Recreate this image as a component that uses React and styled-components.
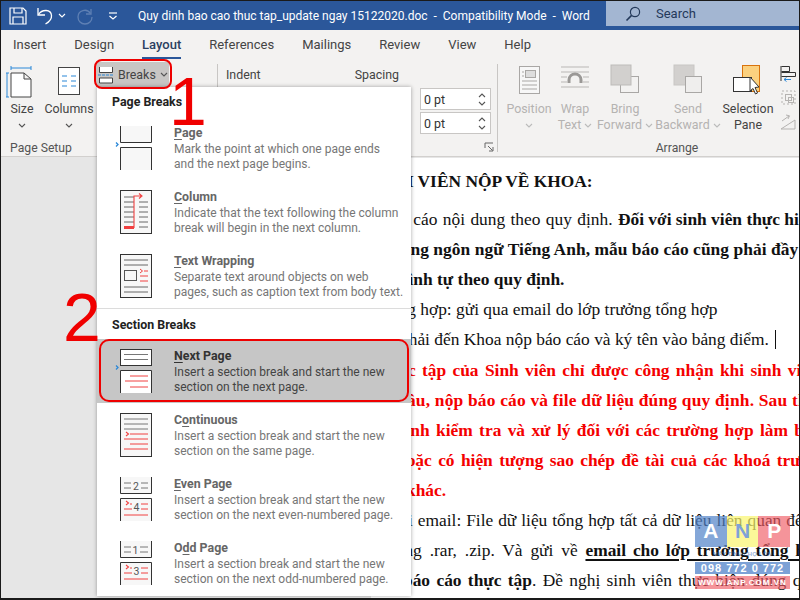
import React from 'react';
import styled, { createGlobalStyle } from 'styled-components';

const UI_FONT = `Roboto, 'Open Sans', sans-serif`;

const GlobalStyle = createGlobalStyle`
  html, body {
    margin: 0;
    padding: 0;
    background: #fff;
  }
`;

const Root = styled.div`
  position: relative;
  box-sizing: border-box;
  width: 800px;
  height: 600px;
  border: 1px solid #1a1a1a;
  border-bottom-width: 2px;
  overflow: hidden;
  display: flex;
  flex-direction: column;
  font-family: ${UI_FONT};
  background: #e6e6e6;
`;

const TitleBar = styled.div`
  height: 29px;
  flex: none;
  display: flex;
  align-items: center;
  background: #2b579a;
  color: #fff;
`;

const QuickAccess = styled.div`
  display: flex;
  align-items: center;
  width: 137px;
  flex: none;
  padding-left: 7px;
  box-sizing: border-box;
`;

const QuickSlot = styled.div`
  display: flex;
  margin-left: ${p => p.$left || 0}px;
`;

const DocTitle = styled.div`
  width: 468px;
  flex: none;
  font-size: 12px;
  white-space: pre;
`;

const SearchBox = styled.div`
  flex: 1;
  height: 25px;
  align-self: flex-start;
  display: flex;
  align-items: center;
  gap: 15px;
  padding-left: 19px;
  background: #a3b6d2;
  color: #24395a;
  font-size: 13px;
`;

const Tabs = styled.div`
  height: 30px;
  flex: none;
  display: flex;
  gap: 28px;
  padding-left: 12px;
  background: #f3f2f1;
`;

const Tab = styled.div`
  height: 27px;
  line-height: 30px;
  font-size: 13px;
  color: #444;
  ${p => p.$active && `
    color: #2b3f5f;
    font-weight: 500;
    border-bottom: 2px solid #2b579a;
  `}
`;

const Ribbon = styled.div`
  height: 96px;
  flex: none;
  display: flex;
  background: #f3f2f1;
  border-bottom: 1px solid #d2d0ce;
`;

const Group = styled.div`
  position: relative;
  width: ${p => p.$width}px;
  flex: none;
  box-sizing: border-box;
  margin-top: 4px;
  height: 88px;
  border-right: ${p => (p.$last ? 'none' : '1px solid #c8c6c4')};
  display: flex;
`;

const LargeButton = styled.div`
  width: ${p => p.$width}px;
  flex: none;
  display: flex;
  flex-direction: column;
  align-items: center;
  font-size: 12.4px;
  line-height: 16px;
  color: ${p => (p.$disabled ? '#b5b3b1' : '#444')};
  white-space: nowrap;
`;

const LargeIcon = styled.div`
  height: 37px;
  display: flex;
  align-items: flex-start;
`;

const LabelLine = styled.span`
  display: flex;
  align-items: center;
  height: 16px;
  gap: 3px;
`;

const GroupLabel = styled.div`
  position: absolute;
  bottom: -4px;
  left: ${p => p.$center - 50}px;
  width: 100px;
  text-align: center;
  font-size: 12.2px;
  line-height: 16px;
  color: #555;
`;

const BreaksColumn = styled.div`
  padding-left: 1px;
`;

const BreaksButton = styled.div`
  margin-top: -2px;
  width: 73px;
  height: 25px;
  display: flex;
  align-items: center;
  gap: 4px;
  padding-left: 2px;
  box-sizing: border-box;
  background: #c8c6c4;
  font-size: 12.4px;
  color: #444;
`;

const ParagraphColumn = styled.div`
  flex: 1;
  display: flex;
  flex-direction: column;
  padding-left: 8px;
`;

const FieldHeads = styled.div`
  display: flex;
  font-size: 12.4px;
  line-height: 16px;
  color: #444;
  margin-top: 3px;
  gap: 94px;
`;

const SpinColumn = styled.div`
  margin: 5px 0 0 194px;
  display: flex;
  flex-direction: column;
  gap: 2px;
`;

const SpinInput = styled.div`
  width: 71px;
  height: 22px;
  box-sizing: border-box;
  border: 1px solid #c8c6c4;
  background: #fff;
  display: flex;
  align-items: center;
  justify-content: space-between;
  padding: 0 4px 0 3px;
  font-size: 12.4px;
  color: #333;
`;

const SpinArrows = styled.div`
  display: flex;
  flex-direction: column;
  gap: 3px;
`;

const Launcher = styled.div`
  position: absolute;
  right: 3px;
  bottom: 0;
  display: flex;
`;

const SmallColumn = styled.div`
  display: flex;
  flex-direction: column;
  gap: 4px;
`;

const SmallRow = styled.div`
  display: flex;
  align-items: center;
  gap: 2px;
  height: 20px;
  font-size: 12.4px;
  color: ${p => (p.$disabled ? '#b5b3b1' : '#444')};
  white-space: nowrap;
`;

const Workspace = styled.div`
  flex: 1;
  min-height: 0;
  padding-left: 370px;
  overflow: hidden;
`;

const Page = styled.div`
  height: 100%;
  margin-top: 1px;
  padding-top: 8px;
  box-sizing: border-box;
  background: #fff;
  font-family: 'Liberation Serif', 'Times New Roman', serif;
  font-size: 17.4px;
  color: #111;
`;

const Line = styled.div`
  height: 30px;
  line-height: 30px;
  white-space: pre;
  padding-left: ${p => p.$start}px;
  margin-top: ${p => p.$gap || 0}px;
  word-spacing: ${p => p.$words || 0}px;
  letter-spacing: ${p => p.$letters || 0}px;
  font-weight: ${p => (p.$bold ? 700 : 400)};
  color: ${p => (p.$red ? '#f40000' : 'inherit')};
`;

const Strong = styled.b`
  word-spacing: ${p => p.$words || 0}px;
  text-decoration: ${p => (p.$under ? 'underline' : 'none')};
  text-decoration-thickness: 2px;
  text-underline-offset: 3px;
`;

const Caret = styled.span`
  display: inline-block;
  width: 1px;
  height: 19px;
  margin-left: 6px;
  background: #111;
  vertical-align: -4px;
`;

const Menu = styled.div`
  position: absolute;
  left: 96px;
  top: 86px;
  width: 314px;
  height: 509px;
  background: #fff;
  box-shadow: 0 0 4px rgba(0, 0, 0, 0.35);
`;

const MenuHead = styled.div`
  height: ${p => p.$height}px;
  line-height: ${p => p.$line}px;
  padding-left: 15px;
  font-size: 12.4px;
  font-weight: 700;
  color: #222;
  ${p => p.$rule && 'border-top: 1px solid #dcdcdc;'}
`;

const MenuItem = styled.div`
  height: 64px;
  box-sizing: border-box;
  display: flex;
  gap: 18px;
  padding: 8px 0 0 15px;
  ${p => p.$active && 'background: #c6c6c6;'}
`;

const ItemText = styled.div`
  flex: 1;
`;

const ItemTitle = styled.div`
  font-size: 12.4px;
  line-height: 18px;
  font-weight: 700;
  color: ${p => (p.$active ? '#333' : '#666')};
  u {
    text-underline-offset: 2px;
  }
`;

const ItemDesc = styled.div`
  font-size: 12px;
  line-height: 15px;
  color: ${p => (p.$active ? '#444' : '#767676')};
  white-space: nowrap;
`;

const Callout = styled.div`
  position: absolute;
  left: ${p => p.$left}px;
  top: ${p => p.$top}px;
  width: ${p => p.$width}px;
  height: ${p => p.$height}px;
  box-sizing: border-box;
  border: 2px solid #ee0000;
  border-radius: ${p => p.$radius}px;
`;

const Numeral = styled.div`
  position: absolute;
  left: ${p => p.$left}px;
  top: ${p => p.$top}px;
  font-family: 'Liberation Sans', Arial, sans-serif;
  font-size: 68px;
  line-height: 68px;
  color: #f00000;
`;

const Watermark = styled.div`
  position: absolute;
  left: 694px;
  top: 515px;
  width: 95px;
  display: flex;
  flex-direction: column;
  font-family: 'Liberation Sans', Arial, sans-serif;
  font-weight: 700;
  color: #fff;
  text-align: center;
`;

const LogoRow = styled.div`
  display: flex;
  height: 31px;
`;

const LogoLetter = styled.div`
  flex: 1;
  background: ${p => p.$bg};
  color: ${p => p.$color || '#fff'};
  font-size: 21px;
  line-height: 30px;
`;

const WatermarkNote = styled.div`
  height: 15px;
  line-height: 15px;
  font-size: 6px;
  color: rgba(60, 110, 180, 0.55);
  white-space: nowrap;
`;

const WatermarkBar = styled.div`
  height: ${p => p.$height}px;
  line-height: ${p => p.$height}px;
  margin-bottom: ${p => p.$after || 0}px;
  background: ${p => p.$bg};
  font-size: ${p => p.$size}px;
  letter-spacing: 1px;
  white-space: nowrap;
  overflow: hidden;
`;

const Chevron = ({ color = '#555', up = false }) => (
  <svg width="8" height="5" viewBox="0 0 8 5">
    <path d={up ? 'M1 4 L4 1 L7 4' : 'M1 1 L4 4 L7 1'} fill="none" stroke={color} strokeWidth="1.1" />
  </svg>
);

const SaveIcon = () => (
  <svg width="20" height="20" viewBox="0 0 20 20" fill="none" stroke="#fff" strokeWidth="1.2">
    <path d="M2 2 H15 L18 5 V18 H2 Z" />
    <path d="M6 2 V7 H14 V2" />
    <path d="M5 18 V11 H15 V18" />
  </svg>
);

const UndoIcon = () => (
  <svg width="20" height="20" viewBox="0 0 20 20" fill="none" stroke="#fff" strokeWidth="1.3">
    <path d="M2 2 V9 H9" />
    <path d="M2.5 8.5 C6 3 15 3 15.5 9.5 C15.8 13 13 16 9.5 18" />
  </svg>
);

const RedoIcon = () => (
  <svg width="20" height="20" viewBox="0 0 20 20" fill="none" stroke="#5f80b4" strokeWidth="1.3">
    <path d="M16 3 V8 H11" />
    <path d="M15.5 7.5 C12 2 3 4 3 11 C3 15 6 18 10 18 C14 18 17 15 17 11" />
  </svg>
);

const CustomizeIcon = () => (
  <svg width="10" height="8" viewBox="0 0 10 8" fill="none" stroke="#fff" strokeWidth="1.2">
    <path d="M1 1 H9" />
    <path d="M1.5 4 L5 7 L8.5 4" />
  </svg>
);

const SearchIcon = () => (
  <svg width="16" height="16" viewBox="0 0 16 16" fill="none" stroke="#24395a" strokeWidth="1.2">
    <circle cx="10" cy="6" r="4.6" />
    <path d="M6.6 9.4 L1.5 14.5" strokeWidth="1.6" />
  </svg>
);

const SizeIcon = () => (
  <svg width="32" height="36" viewBox="0 0 32 36" fill="none">
    <path d="M5 33 V9 H18 L25 15 V33 Z M18 9 V15 H25" fill="#fff" stroke="#444" />
    <path d="M5 4 H25 M5 2 V6 M25 2 V6" stroke="#2b88d8" />
    <path d="M1 9 V33 M-1 9 H3 M-1 33 H3" stroke="#2b88d8" />
  </svg>
);

const ColumnsIcon = () => (
  <svg width="24" height="36" viewBox="0 0 24 36" fill="none">
    <rect x="1.5" y="3.5" width="21" height="27" fill="#fff" stroke="#444" />
    <path d="M5 12 H10 M14 12 H19 M5 17 H10 M14 17 H19 M5 22 H10 M14 22 H19" stroke="#2b88d8" strokeWidth="1.2" />
  </svg>
);

const BreaksIcon = () => (
  <svg width="16" height="18" viewBox="0 0 16 18" fill="none">
    <path d="M1.5 1 V6.5 H14.5 V1" fill="#fff" stroke="#444" />
    <path d="M0 9 H16" stroke="#2b88d8" strokeDasharray="3 1" />
    <path d="M1.5 17 V12 H14.5 V17 Z" fill="#fff" stroke="#444" />
  </svg>
);

const PositionIcon = () => (
  <svg width="24" height="30" viewBox="0 0 24 30" fill="none" stroke="#a9a7a5">
    <rect x="2.5" y="2.5" width="20" height="27" fill="#f7f7f7" />
    <rect x="8.5" y="6.5" width="10" height="7" fill="#ddd" />
    <path d="M5 8 H7 M5 12 H7 M5 17 H20 M5 21 H20 M5 25 H20" />
  </svg>
);

const WrapIcon = () => (
  <svg width="30" height="26" viewBox="0 0 30 26" fill="none" stroke="#b9b7b5">
    <path d="M1 3 H29 M1 8 H29 M1 13 H7 M23 13 H29 M1 18 H7 M23 18 H29 M1 23 H29" />
    <path d="M9 19 V16 C9 8 21 8 21 16 V19" stroke="#9a9896" strokeWidth="3" />
  </svg>
);

const BringIcon = () => (
  <svg width="30" height="30" viewBox="0 0 30 30">
    <rect x="10.5" y="12.5" width="18" height="16" fill="#f3f2f1" stroke="#a9a7a5" />
    <rect x="1" y="1" width="20" height="20" fill="#d2d0ce" stroke="#bdbbb9" />
  </svg>
);

const SendIcon = () => (
  <svg width="30" height="30" viewBox="0 0 30 30">
    <rect x="1" y="1" width="20" height="20" fill="#d2d0ce" stroke="#c8c6c4" />
    <rect x="12.5" y="12.5" width="16" height="16" fill="#efeeed" stroke="#a9a7a5" />
  </svg>
);

const SelectionIcon = () => (
  <svg width="32" height="32" viewBox="0 0 32 32">
    <rect x="10.5" y="1.5" width="17" height="26" fill="#fbd17f" stroke="#d9730d" />
    <rect x="1.5" y="13.5" width="18" height="14" fill="#fff" stroke="#333" />
    <path d="M18 13 V27 L21 24.5 L23.5 30 L25.5 29 L23 23.5 L27 23 Z" fill="#fff" stroke="#333" />
  </svg>
);

const AlignIcon = () => (
  <svg width="17" height="18" viewBox="0 0 17 18" fill="none">
    <path d="M1 1 V16" stroke="#333" />
    <path d="M1.5 1.5 H9.5 V6.5 H1.5 M1.5 7.5 H15.5 V11.5 H1.5" stroke="#333" />
    <path d="M11 14.5 H4 M6.5 12.5 L4 14.5 L6.5 16.5" stroke="#2b88d8" />
  </svg>
);

const GroupIcon = () => (
  <svg width="17" height="18" viewBox="0 0 17 18" fill="none" stroke="#b5b3b1">
    <path d="M2 2 H15 V15 H2 Z" strokeDasharray="2 2" />
    <rect x="5.5" y="5.5" width="6" height="6" />
    <rect x="8.5" y="8.5" width="5" height="5" />
  </svg>
);

const RotateIcon = () => (
  <svg width="17" height="18" viewBox="0 0 17 18" fill="none" stroke="#b5b3b1">
    <path d="M1 16 L15 7 V16 Z" />
    <path d="M2 8 L9 3 M6 2 L9.5 2.8 L8 6" />
  </svg>
);

const LauncherIcon = () => (
  <svg width="10" height="10" viewBox="0 0 10 10" fill="none" stroke="#666">
    <path d="M1 6 V1 H9" />
    <path d="M4 4 L8.5 8.5 M5 9 H9 V5" />
  </svg>
);

const Marker = () => <path d="M4 18.5 L6 20.5 L4 22.5" fill="none" stroke="#2b88d8" strokeWidth="1.3" />;

const RedMark = ({ y }) => <path d={`M14 ${y - 2} L16.5 ${y} L14 ${y + 2}`} fill="none" stroke="#f04040" strokeWidth="1.1" />;

const Shape = styled.svg.attrs({ width: 44, height: 48, viewBox: '0 0 44 48' })`
  flex: none;
`;

const TopOpen = () => <path d="M8.5 2 V18.5 H39.5 V2" fill="#f7f7f7" stroke="#333" />;
const BottomOpen = ({ fill = '#f7f7f7' }) => <path d="M8.5 46 V23.5 H39.5 V46" fill={fill} stroke="#333" />;

const icons = {
  page: (
    <Shape>
      <TopOpen />
      <BottomOpen />
      <Marker />
    </Shape>
  ),
  column: (
    <Shape>
      <rect x="8.5" y="2.5" width="31" height="43" fill="#f7f7f7" stroke="#333" />
      <path d="M12 9 H22 M12 14 H22 M12 19 H22 M12 24 H22 M12 29 H22 M12 34 H22 M27 14 H36 M27 19 H36 M27 24 H36 M27 29 H36 M27 34 H36 M27 39 H36" stroke="#666" />
      <path d="M12 39.5 H22 V8 H29 M27 5.5 L30 8 L27 10.5" fill="none" stroke="#f04040" strokeWidth="1.1" />
      <rect x="12" y="38" width="10" height="3" fill="#f04040" />
    </Shape>
  ),
  wrap: (
    <Shape>
      <rect x="8.5" y="2.5" width="31" height="43" fill="#f7f7f7" stroke="#333" />
      <path d="M12 8 H36 M12 13 H36 M12 35 H36 M12 40 H36" stroke="#666" />
      <rect x="12.5" y="18.5" width="12" height="10" fill="none" stroke="#555" />
      <path d="M32 19 H36 M28 24 H36 M28 29 H36" stroke="#f04040" />
      <path d="M28 17 L30.5 19 L28 21" fill="none" stroke="#f04040" />
    </Shape>
  ),
  next: (
    <Shape>
      <rect x="8.5" y="2.5" width="31" height="16" fill="#fff" stroke="#333" />
      <path d="M12 7.5 H36 M12 12.5 H36" stroke="#777" />
      <BottomOpen fill="#fff" />
      <path d="M18 29 H36 M13 34 H36 M18 40 H36" stroke="#f04040" />
      <Marker />
    </Shape>
  ),
  continuous: (
    <Shape>
      <rect x="8.5" y="2.5" width="31" height="43" fill="#f7f7f7" stroke="#333" />
      <path d="M12 8 H36 M12 13 H36 M12 18 H36" stroke="#777" />
      <path d="M18 23 H36 M12 28 H36 M18 33 H36 M12 38 H36" stroke="#f04040" />
      <RedMark y={23} />
    </Shape>
  ),
  even: (
    <Shape>
      <TopOpen />
      <path d="M12 8 H19 M12 13 H19 M29 8 H36 M29 13 H36" stroke="#777" />
      <text x="24" y="15" fontSize="10.5" fill="#555" textAnchor="middle">2</text>
      <BottomOpen />
      <path d="M18 29 H20 M12 34 H20 M12 40 H36 M29 29 H36 M29 34 H36" stroke="#f04040" />
      <text x="24.5" y="36" fontSize="10.5" fill="#555" textAnchor="middle">4</text>
      <RedMark y={28} />
    </Shape>
  ),
  odd: (
    <Shape>
      <TopOpen />
      <path d="M12 8 H19 M12 13 H19 M28 8 H36 M28 13 H36" stroke="#777" />
      <text x="23.5" y="15" fontSize="10.5" fill="#555" textAnchor="middle">1</text>
      <BottomOpen />
      <path d="M18 29 H20 M12 34 H20 M12 40 H36 M29 29 H36 M29 34 H36" stroke="#f04040" />
      <text x="24.5" y="36" fontSize="10.5" fill="#555" textAnchor="middle">3</text>
      <RedMark y={28} />
    </Shape>
  ),
};

const pageBreaks = [
  { icon: 'page', key: 'P', rest: 'age', desc: ['Mark the point at which one page ends', 'and the next page begins.'] },
  { icon: 'column', key: 'C', rest: 'olumn', desc: ['Indicate that the text following the column', 'break will begin in the next column.'] },
  { icon: 'wrap', key: 'T', rest: 'ext Wrapping', desc: ['Separate text around objects on web', 'pages, such as caption text from body text.'] },
];

const sectionBreaks = [
  { icon: 'next', key: 'N', rest: 'ext Page', active: true, desc: ['Insert a section break and start the new', 'section on the next page.'] },
  { icon: 'continuous', before: 'C', key: 'o', rest: 'ntinuous', desc: ['Insert a section break and start the new', 'section on the same page.'] },
  { icon: 'even', key: 'E', rest: 'ven Page', desc: ['Insert a section break and start the new', 'section on the next even-numbered page.'] },
  { icon: 'odd', before: 'O', key: 'd', rest: 'd Page', desc: ['Insert a section break and start the new', 'section on the next odd-numbered page.'] },
];

const BreakItem = ({ item }) => (
  <MenuItem $active={item.active}>
    {icons[item.icon]}
    <ItemText>
      <ItemTitle $active={item.active}>{item.before}<u>{item.key}</u>{item.rest}</ItemTitle>
      <ItemDesc $active={item.active}>{item.desc[0]}</ItemDesc>
      <ItemDesc $active={item.active}>{item.desc[1]}</ItemDesc>
    </ItemText>
  </MenuItem>
);

const Spin = () => (
  <SpinInput>
    0 pt
    <SpinArrows>
      <Chevron up />
      <Chevron />
    </SpinArrows>
  </SpinInput>
);

const BreakMenu = () => (
  <Menu>
    <MenuHead $height={29} $line={29}>Page Breaks</MenuHead>
    {pageBreaks.map(item => <BreakItem key={item.icon} item={item} />)}
    <MenuHead $height={30} $line={32} $rule>Section Breaks</MenuHead>
    {sectionBreaks.map(item => <BreakItem key={item.icon} item={item} />)}
  </Menu>
);

export default function App() {
  return (
    <Root>
      <GlobalStyle />
      <TitleBar>
        <QuickAccess>
          <QuickSlot><SaveIcon /></QuickSlot>
          <QuickSlot $left={8}><UndoIcon /></QuickSlot>
          <QuickSlot $left={2}><Chevron color="#fff" /></QuickSlot>
          <QuickSlot $left={9}><RedoIcon /></QuickSlot>
          <QuickSlot $left={13}><CustomizeIcon /></QuickSlot>
        </QuickAccess>
        <DocTitle>Quy dinh bao cao thuc tap_update ngay 15122020.doc  -  Compatibility Mode  -  Word</DocTitle>
        <SearchBox>
          <SearchIcon />
          Search
        </SearchBox>
      </TitleBar>

      <Tabs>
        <Tab>Insert</Tab>
        <Tab>Design</Tab>
        <Tab $active>Layout</Tab>
        <Tab>References</Tab>
        <Tab>Mailings</Tab>
        <Tab>Review</Tab>
        <Tab>View</Tab>
        <Tab>Help</Tab>
      </Tabs>

      <Ribbon>
        <Group $width={217}>
          <LargeButton $width={42}>
            <LargeIcon><SizeIcon /></LargeIcon>
            Size
            <LabelLine><Chevron /></LabelLine>
          </LargeButton>
          <LargeButton $width={52}>
            <LargeIcon><ColumnsIcon /></LargeIcon>
            Columns
            <LabelLine><Chevron /></LabelLine>
          </LargeButton>
          <BreaksColumn>
            <BreaksButton>
              <BreaksIcon />
              Breaks
              <Chevron />
            </BreaksButton>
          </BreaksColumn>
          <GroupLabel $center={40}>Page Setup</GroupLabel>
        </Group>
        <Group $width={280}>
          <ParagraphColumn>
            <FieldHeads>
              <span>Indent</span>
              <span>Spacing</span>
            </FieldHeads>
            <SpinColumn>
              <Spin />
              <Spin />
            </SpinColumn>
          </ParagraphColumn>
          <Launcher><LauncherIcon /></Launcher>
        </Group>
        <Group $width={303} $last>
          <LargeButton $width={62} $disabled>
            <LargeIcon><PositionIcon /></LargeIcon>
            Position
            <LabelLine><Chevron color="#bbb" /></LabelLine>
          </LargeButton>
          <LargeButton $width={30} $disabled>
            <LargeIcon><WrapIcon /></LargeIcon>
            Wrap
            <LabelLine>Text <Chevron color="#bbb" /></LabelLine>
          </LargeButton>
          <LargeButton $width={70} $disabled>
            <LargeIcon><BringIcon /></LargeIcon>
            Bring
            <LabelLine>Forward <Chevron color="#bbb" /></LabelLine>
          </LargeButton>
          <LargeButton $width={56} $disabled>
            <LargeIcon><SendIcon /></LargeIcon>
            Send
            <LabelLine>Backward <Chevron color="#bbb" /></LabelLine>
          </LargeButton>
          <LargeButton $width={64}>
            <LargeIcon><SelectionIcon /></LargeIcon>
            Selection
            <span>Pane</span>
          </LargeButton>
          <SmallColumn>
            <SmallRow><AlignIcon /> Align</SmallRow>
            <SmallRow $disabled><GroupIcon /> Group</SmallRow>
            <SmallRow $disabled><RotateIcon /> Rotate</SmallRow>
          </SmallColumn>
          <GroupLabel $center={179}>Arrange</GroupLabel>
        </Group>
      </Ribbon>

      <Workspace>
        <Page>
          <Line $bold $start={0}>SINH VIÊN NỘP VỀ KHOA:</Line>
          <Line $gap={8} $start={9} $words={1}>Báo cáo nội dung theo quy định. <Strong>Đối với sinh viên thực hiện</Strong></Line>
          <Line $bold $start={21} $letters={0.05}>bằng ngôn ngữ Tiếng Anh, mẫu báo cáo cũng phải đầy đủ</Line>
          <Line $bold $start={24}>trình tự theo quy định.</Line>
          <Line $start={14}>tổng hợp: gửi qua email do lớp trưởng tổng hợp</Line>
          <Line $start={29}>phải đến Khoa nộp báo cáo và ký tên vào bảng điểm.<Caret /></Line>
          <Line $gap={1} $bold $red $start={11} $words={2}>thực tập của Sinh viên chỉ được công nhận khi sinh viên</Line>
          <Line $bold $red $start={28} $letters={0.2}>cầu, nộp báo cáo và file dữ liệu đúng quy định. Sau thời</Line>
          <Line $bold $red $start={21} $words={2}>hành kiểm tra và xử lý đối với các trường hợp làm bài</Line>
          <Line $bold $red $start={26} $words={2}>hoặc có hiện tượng sao chép đề tài cuả các khoá trước</Line>
          <Line $bold $red $start={35}>khác.</Line>
          <Line $start={15} $words={0.6}>Gửi email: File dữ liệu tổng hợp tất cả dữ liệu liên quan đến</Line>
          <Line $start={17} $words={3.5}>dạng .rar, .zip. Và gửi về <Strong $under $words={2.5}>email cho lớp trưởng tổng hợp</Strong></Line>
          <Line $start={32} $words={2}><Strong $words={2}>báo cáo thực tập</Strong>. Đề nghị sinh viên thực hiện đúng quy</Line>
        </Page>
      </Workspace>

      <BreakMenu />

      <Callout $left={93} $top={58} $width={78} $height={30} $radius={8} />
      <Callout $left={98} $top={338} $width={310} $height={63} $radius={10} />
      <Numeral $left={168} $top={66}>1</Numeral>
      <Numeral $left={62} $top={282}>2</Numeral>

      <Watermark>
        <LogoRow>
          <LogoLetter $bg="rgba(80, 130, 200, 0.7)">A</LogoLetter>
          <LogoLetter $bg="rgba(250, 245, 110, 0.7)" $color="#7ea2d8">N</LogoLetter>
          <LogoLetter $bg="rgba(240, 90, 100, 0.65)">P</LogoLetter>
        </LogoRow>
        <WatermarkNote>MÁY TÍNH CHỢ LỚN</WatermarkNote>
        <WatermarkBar $height={12} $after={2} $bg="rgba(80, 130, 200, 0.75)" $size={11}>098 772 0 772</WatermarkBar>
        <WatermarkBar $height={13} $bg="rgba(240, 90, 100, 0.65)" $size={8}>WWW.ANP.COM.VN</WatermarkBar>
      </Watermark>
    </Root>
  );
}
